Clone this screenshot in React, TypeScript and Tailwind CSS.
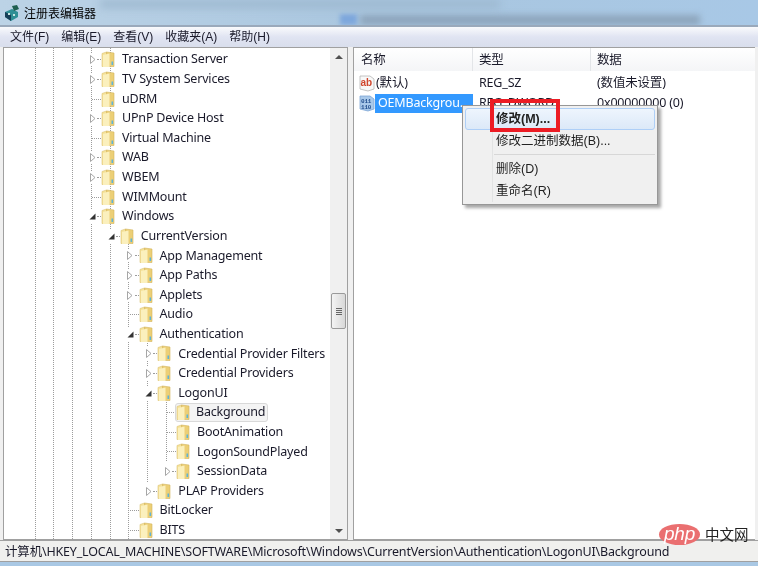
const rows = [
  { label: 'Transaction Server', level: 0, state: 'closed' },
  { label: 'TV System Services', level: 0, state: 'closed' },
  { label: 'uDRM', level: 0, state: 'leaf' },
  { label: 'UPnP Device Host', level: 0, state: 'closed' },
  { label: 'Virtual Machine', level: 0, state: 'leaf' },
  { label: 'WAB', level: 0, state: 'closed' },
  { label: 'WBEM', level: 0, state: 'closed' },
  { label: 'WIMMount', level: 0, state: 'leaf' },
  { label: 'Windows', level: 0, state: 'open' },
  { label: 'CurrentVersion', level: 1, state: 'open' },
  { label: 'App Management', level: 2, state: 'closed' },
  { label: 'App Paths', level: 2, state: 'closed' },
  { label: 'Applets', level: 2, state: 'closed' },
  { label: 'Audio', level: 2, state: 'leaf' },
  { label: 'Authentication', level: 2, state: 'open' },
  { label: 'Credential Provider Filters', level: 3, state: 'closed' },
  { label: 'Credential Providers', level: 3, state: 'closed' },
  { label: 'LogonUI', level: 3, state: 'open' },
  { label: 'Background', level: 4, state: 'leaf', selected: true },
  { label: 'BootAnimation', level: 4, state: 'leaf' },
  { label: 'LogonSoundPlayed', level: 4, state: 'leaf' },
  { label: 'SessionData', level: 4, state: 'closed' },
  { label: 'PLAP Providers', level: 3, state: 'closed' },
  { label: 'BitLocker', level: 2, state: 'leaf' },
  { label: 'BITS', level: 2, state: 'leaf' },
]

const menus = ['文件(F)', '编辑(E)', '查看(V)', '收藏夹(A)', '帮助(H)']

function Folder() {
  return (
    <svg width="14" height="17" viewBox="0 0 14 17" className="shrink-0">
      <path d="M1 2.5 L5.5 1 L5.5 15.5 L1 15.5 Z" fill="#f5e29a" stroke="#dcc276" strokeWidth="0.6" />
      <path d="M5.5 1 L13 2 L13 15.5 L5.5 15.5 Z" fill="#eccf76" stroke="#d4b560" strokeWidth="0.6" />
      <path d="M2 4 L8.5 2.6 L8.5 16 L2 16 Z" fill="#fbf0bd" />
      <rect x="10.5" y="10.5" width="1.6" height="3.5" fill="#5fb4d6" />
    </svg>
  )
}

function Expander({ state }: { state: string }) {
  if (state === 'open') {
    return (
      <svg width="7" height="7" viewBox="0 0 7 7">
        <path d="M6.5 0.5 L6.5 6.5 L0.5 6.5 Z" fill="#333" />
      </svg>
    )
  }
  return (
    <svg width="6" height="9" viewBox="0 0 6 9">
      <path d="M0.5 0.5 L5 4.5 L0.5 8.5 Z" fill="#fff" stroke="#a6a6a6" />
    </svg>
  )
}

// dotted tree guides, drawn over the tree panel
function TreeLines() {
  const full = [35, 53, 72, 91, 110, 128]
  return (
    <svg className="absolute left-0 top-0 pointer-events-none" width="330" height="493">
      {full.map((x, i) => (
        <line key={x} x1={x - 3.5} x2={x - 3.5} y1={i === 5 ? 188 : 0} y2="493" stroke="#9c9c9c" strokeDasharray="1 1" />
      ))}
      <line x1="143.5" x2="143.5" y1="295" y2="435" stroke="#9c9c9c" strokeDasharray="1 1" />
      <line x1="162.5" x2="162.5" y1="354" y2="414" stroke="#9c9c9c" strokeDasharray="1 1" />
    </svg>
  )
}

function TreeRow({ label, level, state, selected }: { label: string; level: number; state: string; selected?: boolean }) {
  const connector = 'h-0 border-t border-dotted border-[#9c9c9c]'
  return (
    <div className="flex h-[19.62px] items-center" style={{ paddingLeft: 82 + level * 18.75 }}>
      {state === 'leaf' ? (
        <div className="flex h-full w-[15px] shrink-0 items-center pl-[6px]">
          <div className={`${connector} w-full`} />
        </div>
      ) : (
        <div className="flex h-[13px] w-[15px] shrink-0 items-center bg-white pl-[3px]">
          <div className="flex w-[7px] justify-center">
            <Expander state={state} />
          </div>
          <div className={`${connector} ml-[1px] w-[4px]`} />
        </div>
      )}
      <div className={selected ? 'flex h-[19px] items-center gap-[6px] rounded-[3px] border border-[#d9d9d9] bg-[#f4f4f4] pr-[2px] -ml-px' : 'flex items-center gap-[7px]'}>
        <Folder />
        <span className="whitespace-nowrap">{label}</span>
      </div>
    </div>
  )
}

function Scrollbar() {
  return (
    <div className="flex w-[17px] shrink-0 flex-col items-center bg-[#f0f0f0]">
      <div className="flex h-[17px] items-center justify-center">
        <div className="h-0 w-0 border-x-[4px] border-b-[4px] border-x-transparent border-b-[#505050]" />
      </div>
      <div className="h-[228px]" />
      <div className="flex h-[36px] w-[15px] flex-col items-center justify-center gap-[1px] rounded-[2px] border border-[#9a9a9a] bg-gradient-to-r from-[#f4f4f4] to-[#d8d8d8]">
        <div className="h-px w-[6px] bg-[#666]" />
        <div className="h-px w-[6px] bg-[#666]" />
        <div className="h-px w-[6px] bg-[#666]" />
        <div className="h-px w-[6px] bg-[#666]" />
      </div>
      <div className="flex-1" />
      <div className="flex h-[17px] items-center justify-center">
        <div className="h-0 w-0 border-x-[4px] border-t-[4px] border-x-transparent border-t-[#505050]" />
      </div>
    </div>
  )
}

function RegIcon({ kind }: { kind: 'ab' | 'bin' }) {
  return (
    <svg width="16" height="17" viewBox="0 0 16 17" className="shrink-0">
      <path d="M1 1 H11 L15 4 V14 L9 16 L1 14 Z" fill={kind === 'ab' ? '#f8f8f8' : '#a9c9ea'} stroke={kind === 'ab' ? '#b5b5b5' : '#7ea6d6'} strokeWidth="0.8" />
      {kind === 'ab' ? (
        <text x="1.5" y="11" fontSize="10" fontWeight="700" fill="#d0452c" fontFamily="'Liberation Sans', sans-serif">ab</text>
      ) : (
        <text x="2" y="7.5" fontSize="6" fontWeight="700" fill="#24508f" fontFamily="'Liberation Mono', monospace">
          011
          <tspan x="2" dy="6">110</tspan>
        </text>
      )}
    </svg>
  )
}

function ContextMenu() {
  return (
    <div className="absolute left-[108px] top-[57px] h-[100px] w-[196px] border border-[#979797] bg-[#f0f0f0] p-[2px] font-['Liberation_Sans','Noto_Sans_CJK_SC',sans-serif] text-[12.5px] tracking-normal text-[#222] shadow-[3px_3px_3px_rgba(0,0,0,0.35)]">
      <div className="absolute bottom-[2px] left-[29px] top-[2px] w-px bg-[#e2e3e3]" />
      <div className="flex h-[22px] items-center rounded-[3px] border border-[#aecff7] bg-gradient-to-b from-[#eef5fd] to-[#dce9f8] pl-[30px] pt-px font-bold">修改(M)...</div>
      <div className="flex h-[21px] items-center pl-[31px] pt-px">修改二进制数据(B)...</div>
      <div className="ml-[29px] mt-[3px] h-px bg-[#d7d7d7]" />
      <div className="mt-[3px] flex h-[22px] items-center pl-[31px] pt-px">删除(D)</div>
      <div className="flex h-[22px] items-center pl-[31px] pt-px">重命名(R)</div>
    </div>
  )
}

export default function App() {
  return (
    <div className="flex h-[566px] w-[758px] flex-col overflow-hidden bg-white font-['Noto_Sans','Noto_Sans_CJK_SC',sans-serif] text-[12.5px] tracking-[-0.18px] text-[#1a1a2a] blur-[0.3px]">
      <div className="relative flex h-[25px] shrink-0 items-center gap-[3px] overflow-hidden bg-gradient-to-r from-[#bcd3e6] via-[#a9c6df] to-[#a8c8e6] pl-[3px] text-[12px] tracking-normal text-black">
        <div className="absolute left-[360px] top-[15px] h-[10px] w-[340px] bg-[#8ea6bd] blur-[3px]" />
        <div className="absolute left-[340px] top-[14px] h-[11px] w-[17px] bg-[#7ea7dc] blur-[2px]" />
        <div className="absolute left-[100px] top-0 h-[8px] w-[400px] bg-[#9db8cf] blur-[4px]" />
        <svg width="18" height="18" viewBox="0 0 18 18" className="relative">
          <path d="M2 8 L9 5 L15 8 L15 13 L8 17 L2 13 Z" fill="#2f8f95" />
          <path d="M9 2 L14 1 L16 5 L11 7 Z" fill="#1f5f50" />
          <path d="M2 8 L8 11 V17 L2 13 Z" fill="#173f57" />
          <path d="M5 9 h2 v2 h-2 Z M10 10 h2 v2 h-2 Z" fill="#c7e6e0" />
        </svg>
        <span className="relative font-['Noto_Sans_CJK_SC',sans-serif]">注册表编辑器</span>
      </div>
      <div className="flex h-[22px] shrink-0 items-center gap-[12px] border-t-2 border-[#9aa9bb] bg-gradient-to-b from-[#f9fafc] via-[#e0e4f2] to-[#d9deec] pl-[10px] font-['Liberation_Sans','Noto_Sans_CJK_SC',sans-serif] text-[12px] tracking-normal">
        {menus.map((m) => (
          <span key={m}>{m}</span>
        ))}
      </div>
      <div className="flex min-h-0 flex-1 gap-[5px] bg-[#f0f0f0] px-[3px]">
        <div className="flex w-[345px] shrink-0 border border-[#a0a0a0] bg-white">
          <div className="relative min-w-0 flex-1 overflow-hidden pt-[2px]">
            <TreeLines />
            <div className="relative">
              {rows.map((r) => (
                <TreeRow key={r.label} {...r} />
              ))}
            </div>
          </div>
          <Scrollbar />
        </div>
        <div className="relative min-w-0 flex-1 border border-[#a0a0a0] border-r-0 bg-white">
          <div className="flex h-[23px] bg-gradient-to-b from-white to-[#f4f5f7]">
            <div className="w-[119px] border-r border-[#e3e5e8] pl-[7px] leading-[23px]">名称</div>
            <div className="w-[118px] border-r border-[#e3e5e8] pl-[6px] leading-[23px]">类型</div>
            <div className="pl-[6px] leading-[23px]">数据</div>
          </div>
          <div className="pt-[2px]">
            <div className="flex h-[20px] items-center pt-px">
              <div className="flex w-[119px] items-center pl-[5px]">
                <RegIcon kind="ab" />
                <span className="ml-[1px]">(默认)</span>
              </div>
              <div className="w-[118px] pl-[6px]">REG_SZ</div>
              <div className="pl-[6px]">(数值未设置)</div>
            </div>
            <div className="flex h-[20px] items-center pt-px">
              <div className="flex w-[119px] items-center pl-[5px]">
                <RegIcon kind="bin" />
                <span className="flex h-[19px] flex-1 items-center overflow-hidden bg-[#3399ff] pl-[3px] whitespace-nowrap text-white">OEMBackgrou..</span>
              </div>
              <div className="w-[118px] pl-[6px]">REG_DWORD</div>
              <div className="pl-[6px]">0x00000000 (0)</div>
            </div>
          </div>
          <ContextMenu />
          <div className="absolute left-[136px] top-[51px] h-[33px] w-[70px] border-4 border-[#ec1c24]" />
          <div className="absolute -bottom-[6px] left-[305px] z-10 flex items-center gap-[5px]">
            <div className="flex h-[21px] w-[41px] items-center justify-center rounded-[50%] bg-[#ea6f70] font-['Liberation_Sans',sans-serif] text-[19px] font-normal italic text-white">php</div>
            <span className="font-['Noto_Sans_CJK_SC',sans-serif] text-[14.5px] tracking-normal text-[#222]">中文网</span>
          </div>
        </div>
      </div>
      <div className="flex h-[22px] shrink-0 items-center border-y border-[#a0a0a0] bg-[#f0f0ee] pl-[5px] pt-[2px]">
        计算机\HKEY_LOCAL_MACHINE\SOFTWARE\Microsoft\Windows\CurrentVersion\Authentication\LogonUI\Background
      </div>
      <div className="h-[4px] shrink-0 bg-[#a9c8e4]" />
    </div>
  )
}
